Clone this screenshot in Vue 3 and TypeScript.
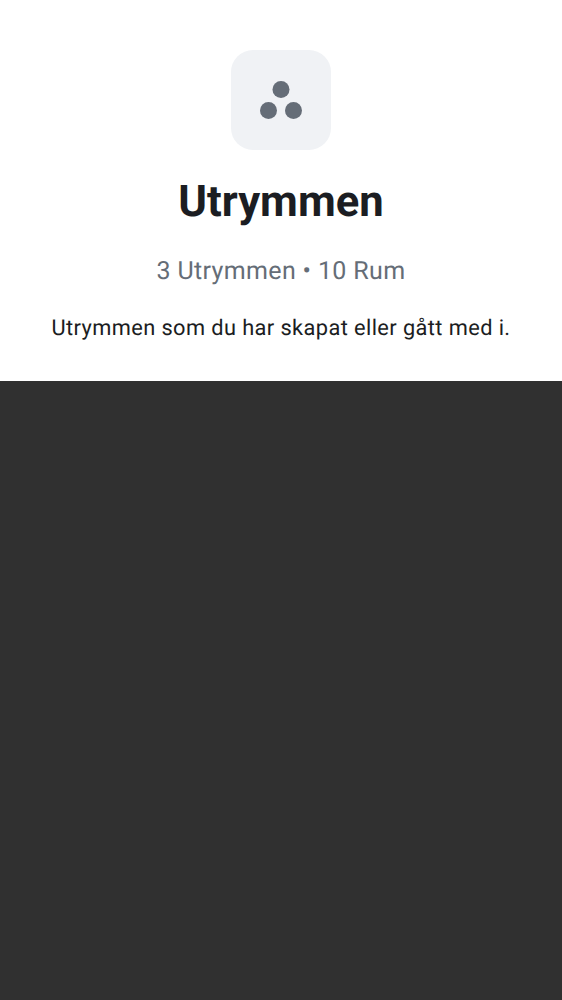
<script setup lang="ts">
const spaces: number = 3
const rooms: number = 10
</script>

<template>
  <main class="screen">
    <header class="header">
      <div class="avatar">
        <svg width="44" height="40" viewBox="0 0 44 40" aria-hidden="true">
          <circle cx="22" cy="9.5" r="8.5" />
          <circle cx="9.5" cy="30.5" r="8.5" />
          <circle cx="34.5" cy="30.5" r="8.5" />
        </svg>
      </div>
      <h1 class="title">Utrymmen</h1>
      <p class="counts">{{ spaces }} Utrymmen • {{ rooms }} Rum</p>
      <p class="description">Utrymmen som du har skapat eller gått med i.</p>
    </header>
  </main>
</template>

<style>
body {
  margin: 0;
  background: #303030;
}
</style>

<style scoped>
.screen {
  min-height: 1000px;
  background: #303030;
  font-family: Roboto, sans-serif;
  text-rendering: geometricPrecision;
}
.header {
  box-sizing: border-box;
  height: 381px;
  padding-top: 50px;
  display: flex;
  flex-direction: column;
  align-items: center;
  background: #fff;
  color: #1b1d22;
  white-space: nowrap;
}
.avatar {
  width: 100px;
  height: 100px;
  border-radius: 22px;
  background: #f0f2f5;
  display: flex;
  align-items: center;
  justify-content: center;
}
.avatar svg {
  fill: #656d77;
}
.title {
  margin: 26px 0 0;
  font-size: 43.6px;
  line-height: 52px;
  font-weight: 700;
}
.counts {
  margin: 28px 0 0;
  font-size: 25px;
  line-height: 32px;
  letter-spacing: 0.35px;
  color: #656d77;
}
.description {
  margin: 27px 0 0;
  font-size: 21.8px;
  line-height: 28px;
  letter-spacing: 0.4px;
}
</style>
